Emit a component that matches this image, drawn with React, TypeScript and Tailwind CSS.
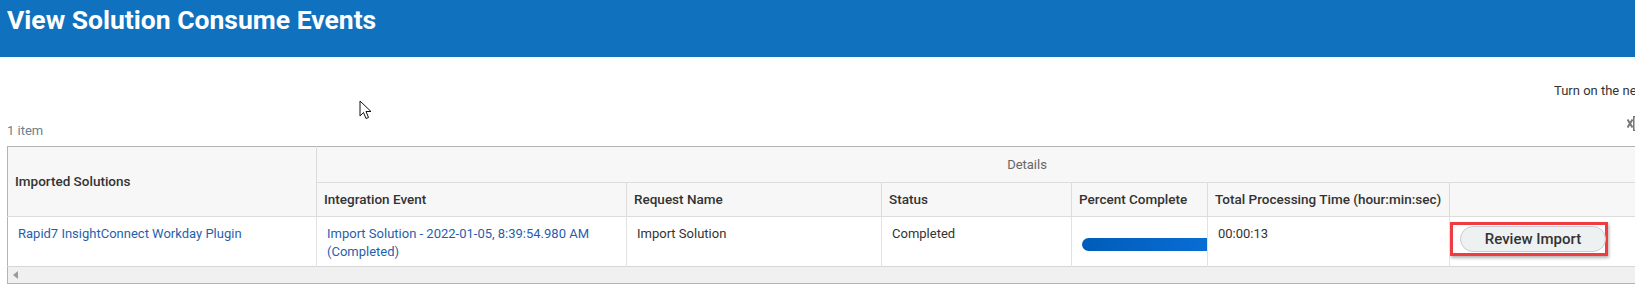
import React from "react";

const th = "border-r border-b border-[#dcdcdc] bg-[#f7f7f7] px-[7px] text-left align-middle text-[13.5px] font-medium text-[#333] whitespace-nowrap";
const td = "border-r border-[#e2e2e2] px-[10px] pt-[8px] align-top text-[13px] leading-[18px]";

const Cursor = () => (
    <svg className="absolute left-[359px] top-[100px]" width="14" height="21" viewBox="0 0 14 21">
        <path
            d="M1 1 L1 16 L4.5 12.5 L7 18.5 L9.5 17.5 L7 11.5 L12 11.5 Z"
            fill="#fff"
            stroke="#111"
            strokeWidth="1"
            strokeLinejoin="round"
        />
    </svg>
);

const App = () => {
    return (
        <div className="relative w-[1635px] h-[302px] overflow-hidden bg-white font-['Roboto',sans-serif]">
            <div className="h-[57px] bg-[#1072be] px-[7px] pt-[3px]">
                <h1 className="text-[26.5px] font-bold leading-[34px] text-white">View Solution Consume Events</h1>
            </div>

            <div className="flex justify-end pt-[24px] h-[70px]">
                <span className="w-[81px] overflow-hidden whitespace-nowrap text-[13px] text-[#333]">
                    Turn on the new tables experience
                </span>
            </div>

            <div className="flex items-end justify-between pl-[7px] h-[12px]">
                <span className="text-[13px] leading-[16px] text-[#707d8a] -mt-[2px]">1 item</span>
                <svg width="8" height="15" viewBox="0 0 8 15" className="mb-[8px]">
                    <path d="M0.5 3.5 L5.5 11.5 M5.5 3.5 L0.5 11.5" stroke="#777" strokeWidth="2" />
                    <path d="M6 0.75 H8 M6.75 0.75 V14.25 M6 14.25 H8" stroke="#777" strokeWidth="1.5" />
                </svg>
            </div>

            <div className="pl-[7px] pt-[7px]">
                <table className="table-fixed w-[1650px] border-collapse border border-[#b3b3b3]">
                    <colgroup>
                        <col className="w-[309px]" />
                        <col className="w-[310px]" />
                        <col className="w-[255px]" />
                        <col className="w-[190px]" />
                        <col className="w-[136px]" />
                        <col className="w-[242px]" />
                        <col className="w-[208px]" />
                    </colgroup>
                    <thead>
                        <tr className="h-[36px]">
                            <th rowSpan={2} className={`${th} px-[6px]`}>Imported Solutions</th>
                            <th colSpan={6} className="border-b border-[#dcdcdc] bg-[#f7f7f7] pl-[80px] text-center text-[13px] font-normal text-[#666]">
                                Details
                            </th>
                        </tr>
                        <tr className="h-[34px]">
                            <th className={th}>Integration Event</th>
                            <th className={th}>Request Name</th>
                            <th className={th}>Status</th>
                            <th className={th}>Percent Complete</th>
                            <th className={th}>Total Processing Time (hour:min:sec)</th>
                            <th className={th}></th>
                        </tr>
                    </thead>
                    <tbody>
                        <tr className="h-[50px] border-b border-[#d6d6d6]">
                            <td className={`${td} text-[#1f5fb0]`}>Rapid7 InsightConnect Workday Plugin</td>
                            <td className={`${td} text-[#1f5fb0]`}>
                                Import Solution - 2022-01-05, 8:39:54.980 AM
                                <br />
                                (Completed)
                            </td>
                            <td className={`${td} text-[#333]`}>Import Solution</td>
                            <td className={`${td} pt-[6px] text-[#333]`}>Completed</td>
                            <td className="border-r border-[#e2e2e2] pl-[10px] align-top pt-[21px] overflow-hidden">
                                <div className="h-[13px] w-[140px] rounded-l-full bg-gradient-to-r from-[#015cb8] to-[#0a6fd8]" />
                            </td>
                            <td className={`${td} text-[#333]`}>00:00:13</td>
                            <td className="align-top pt-[5px] pl-[0px]">
                                <div className="w-[158px] border-[3px] border-[#ef3b42] p-[1px] pl-[7px] shadow-[1px_2px_3px_rgba(0,0,0,0.3)]">
                                    <button className="h-[26px] w-[146px] rounded-full border border-[#c8cdd1] bg-[#eef1f2] text-[15px] font-medium text-[#333]">
                                        Review Import
                                    </button>
                                </div>
                            </td>
                        </tr>
                        <tr className="h-[17px]">
                            <td colSpan={7} className="bg-[#f0f0f0] pl-[5px]">
                                <svg width="6" height="8" viewBox="0 0 6 8">
                                    <path d="M5 0 L0 4 L5 8 Z" fill="#9a9a9a" />
                                </svg>
                            </td>
                        </tr>
                    </tbody>
                </table>
            </div>

            <Cursor />
        </div>
    );
};

export default App;
